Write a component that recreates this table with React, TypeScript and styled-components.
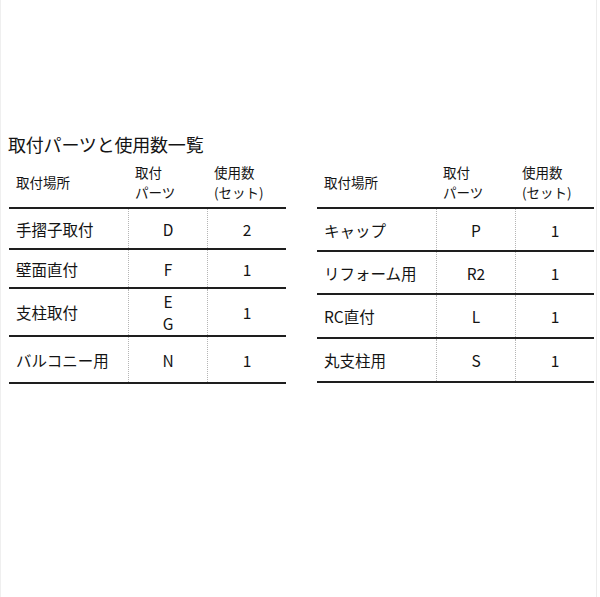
import React from "react";
import styled, { createGlobalStyle } from "styled-components";

const GlobalStyle = createGlobalStyle`
  html, body { margin: 0; padding: 0; background: #fff; }
  body {
    font-family: "Noto Sans CJK JP", "Noto Sans", sans-serif;
    color: #141414;
  }
`;

const Page = styled.div`
  box-sizing: border-box;
  width: 597px;
  height: 597px;
  border-left: 1px solid #efefef;
  border-right: 1px solid #ececec;
  padding: 132px 0 0 7px;
`;

const Title = styled.h1`
  margin: 0;
  font-size: 18px;
  line-height: 24px;
  font-weight: 400;
  letter-spacing: -0.2px;
`;

const Tables = styled.div`
  display: flex;
  gap: 31px;
  margin-top: 5px;
  padding-left: 1px;
`;

const Table = styled.div`
  width: 277px;
  display: flex;
  flex-direction: column;
`;

const HeaderRow = styled.div`
  box-sizing: border-box;
  display: grid;
  grid-template-columns: 119px 79px 79px;
  height: 48px;
  border-bottom: 2px solid #1e1e1e;
  font-size: 13.5px;
  line-height: 20px;
`;

const HeadCell = styled.div`
  display: flex;
  flex-direction: column;
  justify-content: center;
  padding-left: 7px;
  padding-bottom: 4px;
`;

const Row = styled.div<{ $h: number }>`
  box-sizing: border-box;
  display: grid;
  grid-template-columns: 119px 79px 79px;
  height: ${(p) => p.$h}px;
  border-bottom: 2px solid #1e1e1e;
  font-size: 15.5px;
  line-height: 22px;
`;

const PlaceCell = styled.div`
  display: flex;
  align-items: center;
  padding-left: 7px;
`;

const ValueCell = styled.div`
  display: flex;
  flex-direction: column;
  align-items: center;
  justify-content: center;
  border-left: 1px dotted #b5b5b5;
  text-align: center;
`;

type RowData = { place: string; parts: string[]; count: string; h: number };

const left: RowData[] = [
  { place: "手摺子取付", parts: ["D"], count: "2", h: 41 },
  { place: "壁面直付", parts: ["F"], count: "1", h: 39 },
  { place: "支柱取付", parts: ["E", "G"], count: "1", h: 48 },
  { place: "バルコニー用", parts: ["N"], count: "1", h: 47 },
];

const right: RowData[] = [
  { place: "キャップ", parts: ["P"], count: "1", h: 43 },
  { place: "リフォーム用", parts: ["R2"], count: "1", h: 43 },
  { place: "RC直付", parts: ["L"], count: "1", h: 44 },
  { place: "丸支柱用", parts: ["S"], count: "1", h: 44 },
];

function PartsTable({ rows }: { rows: RowData[] }) {
  return (
    <Table>
      <HeaderRow>
        <HeadCell>
          <span>取付場所</span>
        </HeadCell>
        <HeadCell>
          <span>取付</span>
          <span>パーツ</span>
        </HeadCell>
        <HeadCell>
          <span>使用数</span>
          <span>(セット)</span>
        </HeadCell>
      </HeaderRow>
      {rows.map((r) => (
        <Row key={r.place} $h={r.h}>
          <PlaceCell>{r.place}</PlaceCell>
          <ValueCell>
            {r.parts.map((p) => (
              <span key={p}>{p}</span>
            ))}
          </ValueCell>
          <ValueCell>{r.count}</ValueCell>
        </Row>
      ))}
    </Table>
  );
}

export default function App() {
  return (
    <>
      <GlobalStyle />
      <Page>
        <Title>取付パーツと使用数一覧</Title>
        <Tables>
          <PartsTable rows={left} />
          <PartsTable rows={right} />
        </Tables>
      </Page>
    </>
  );
}
